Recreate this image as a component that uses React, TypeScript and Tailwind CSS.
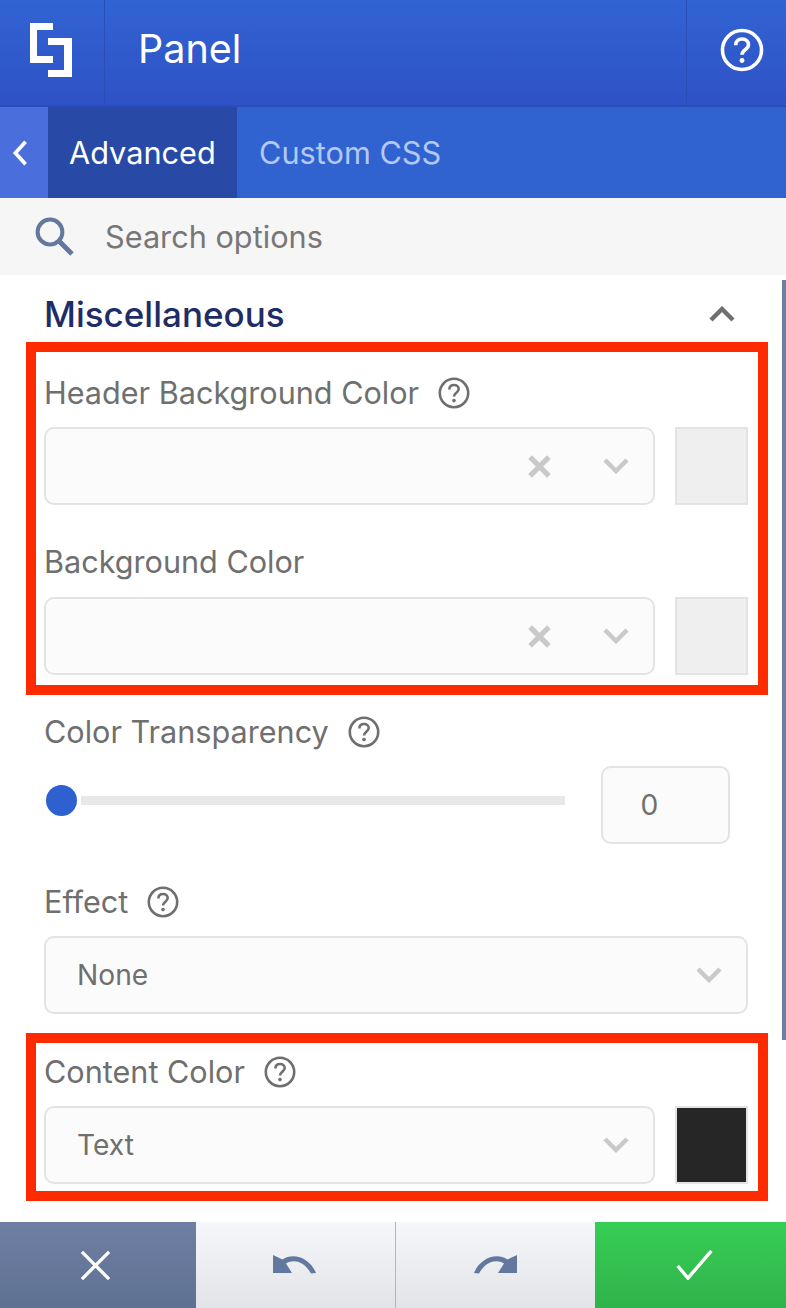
import React from "react";

const HelpIcon: React.FC<{ className?: string }> = ({ className }) => (
  <svg viewBox="0 0 32 32" className={className} fill="none" stroke="currentColor">
    <circle cx="16" cy="16" r="14.2" strokeWidth="2.6" />
    <path d="M11.4 12.6c0-2.9 2-4.6 4.7-4.6s4.6 1.7 4.6 4.1c0 3.6-4.7 3.7-4.7 7.4" strokeWidth="2.6" />
    <circle cx="16" cy="23.6" r="1.8" fill="currentColor" stroke="none" />
  </svg>
);

const Chevron: React.FC<{ className?: string; up?: boolean }> = ({ className, up }) => (
  <svg viewBox="0 0 26 16" className={className} fill="none" stroke="currentColor" strokeWidth="4.4">
    <path d={up ? "M2 14 13 3l11 11" : "M2 2l11 11L24 2"} />
  </svg>
);

const FieldLabel: React.FC<{ text: string; help?: boolean }> = ({ text, help = true }) => (
  <div className="flex items-center gap-[19px] h-[34px] text-[30.6px] leading-[34px] text-[#6f6f6f]">
    <span>{text}</span>
    {help && <HelpIcon className="w-[32px] h-[32px] text-[#6f6f6f]" />}
  </div>
);

const Select: React.FC<{ value?: string; clear?: boolean; className?: string }> = ({ value, clear, className }) => (
  <div
    className={`flex items-center h-[78px] rounded-[10px] border-2 border-[#e3e3e3] bg-[#fbfbfb] pl-[31px] pr-[24px] text-[28.2px] text-[#6f6f6f] ${className ?? ""}`}
  >
    <span className="flex-1">{value}</span>
    {clear && (
      <svg viewBox="0 0 22 22" className="w-[23px] h-[23px] mr-[52px] text-[#c9c9c9]" fill="none" stroke="currentColor" strokeWidth="5">
        <path d="M2 2l18 18M20 2 2 20" />
      </svg>
    )}
    <Chevron className="w-[26px] h-[16px] text-[#c9c9c9]" />
  </div>
);

const ColorField: React.FC<{ value?: string; clear?: boolean; swatch: string }> = ({ value, clear, swatch }) => (
  <div className="flex gap-[20px]">
    <Select value={value} clear={clear} className="flex-1" />
    <div className={`w-[73px] h-[78px] border-2 border-[#e3e3e3] ${swatch}`} />
  </div>
);

const App: React.FC = () => {
  return (
    <div className="relative w-[786px] h-[1308px] flex flex-col overflow-hidden bg-white font-['Inter',sans-serif]">
      {/* top bar */}
      <div className="flex h-[107px] shrink-0 border-b-2 border-[#2a4db8] bg-gradient-to-b from-[#3163d3] to-[#2f52c6] text-white">
        <div className="flex items-center justify-center w-[105px] pb-[5px] border-r border-[#2a4db8]">
          <svg viewBox="30 23 42 54" className="w-[42px] h-[54px] -ml-[3px] fill-white">
            <path d="M30 23h23v7H37v26h16v7H30z" />
            <path d="M48 38h24v39H48v-7h16V45H48z" />
          </svg>
        </div>
        <div className="flex flex-1 items-center pl-[33px] pb-[5px] text-[39.5px] font-normal">Panel</div>
        <div className="flex items-center justify-center w-[100px] pb-[5px] border-l border-[#2a4db8]">
          <HelpIcon className="w-[44px] h-[44px] ml-[10px] text-white" />
        </div>
      </div>

      {/* tabs */}
      <div className="flex h-[91px] shrink-0 bg-[#3063d0] text-[30.7px]">
        <div className="flex items-center justify-center w-[48px] bg-[#4a6fdc] text-white">
          <svg viewBox="0 0 18 28" className="w-[18px] h-[26px] -ml-[8px]" fill="none" stroke="currentColor" strokeWidth="4">
            <path d="M15 2 4 14l11 12" />
          </svg>
        </div>
        <div className="flex items-center pl-[21px] pt-[2px] w-[189px] bg-[#2849a6] text-white">Advanced</div>
        <div className="flex items-center pl-[22px] pt-[2px] text-[#b3c8f5]">Custom CSS</div>
      </div>

      {/* search */}
      <div className="flex items-center h-[77px] shrink-0 pl-[35px] bg-[#f7f6f6] text-[30.7px] text-[#777777]">
        <svg viewBox="0 0 40 40" className="w-[40px] h-[40px] mr-[30px] text-[#63789e]" fill="none" stroke="currentColor">
          <circle cx="15" cy="15" r="12.4" strokeWidth="4" />
          <path d="m24 24 13 13" strokeWidth="5" />
        </svg>
        <span className="pt-[2px]">Search options</span>
      </div>

      {/* options */}
      <div className="relative flex-1">
        <div className="absolute right-0 top-[5px] w-[4px] h-[760px] bg-[#6e7fa3]" />
        <div className="flex items-center justify-between h-[67px] pt-[11px] pl-[44px] pr-[51px]">
          <span className="text-[35px] font-medium text-[#1f2d66]">Miscellaneous</span>
          <Chevron up className="w-[26px] h-[16px] text-[#6f6f6f]" />
        </div>

        <div className="ml-[26px] w-[742px] h-[353px] border-[10px] border-[#ff2b00] pl-[8px] pr-[10px] pt-[24px]">
          <FieldLabel text="Header Background Color" />
          <div className="mt-[17px]">
            <ColorField clear swatch="bg-[#efefef]" />
          </div>
          <div className="mt-[40px]">
            <FieldLabel text="Background Color" help={false} />
          </div>
          <div className="mt-[18px]">
            <ColorField clear swatch="bg-[#efefef]" />
          </div>
        </div>

        <div className="pl-[44px] pr-[38px] pt-[20px]">
          <FieldLabel text="Color Transparency" />
          <div className="flex items-start mt-[17px]">
            <div className="w-[31px] h-[31px] mt-[19px] ml-[2px] rounded-full bg-[#2f60d0]" />
            <div className="w-[484px] h-[9px] mt-[30px] ml-[4px] bg-[#e8e8e8]" />
            <div className="flex items-center justify-center w-[129px] h-[78px] ml-[36px] pr-[32px] rounded-[10px] border-2 border-[#e3e3e3] bg-[#fbfbfb] text-[28.2px] text-[#6f6f6f]">
              0
            </div>
          </div>
          <div className="mt-[41px]">
            <FieldLabel text="Effect" />
          </div>
          <Select value="None" className="mt-[17px]" />
        </div>

        <div className="ml-[26px] w-[742px] mt-[19px] h-[168px] border-[10px] border-[#ff2b00] pl-[8px] pr-[10px] pt-[12px]">
          <FieldLabel text="Content Color" />
          <div className="mt-[17px]">
            <ColorField value="Text" swatch="bg-[#262626]" />
          </div>
        </div>
      </div>

      {/* footer */}
      <div className="flex h-[86px] shrink-0">
        <div className="flex items-center justify-center w-[196px] pr-[5px] bg-gradient-to-b from-[#6e7fa3] to-[#5f7193] text-white">
          <svg viewBox="0 0 32 32" className="w-[31px] h-[31px]" fill="none" stroke="currentColor" strokeWidth="3.4">
            <path d="M2 2l28 28M30 2 2 30" />
          </svg>
        </div>
        <div className="flex items-center justify-center w-[200px] border-r border-[#b5b5b5] bg-gradient-to-b from-[#f6f7fa] to-[#e2e4e7] text-[#63789e]">
          <svg viewBox="0 0 44 20" className="w-[44px] h-[20px] -ml-[2px]" fill="currentColor">
            <path d="M0 0v18h19L13 8.5C20 4 31 5.5 38 18.5l5-.5C37 3.5 21-3 9.5 4.5z" />
          </svg>
        </div>
        <div className="flex items-center justify-center w-[199px] bg-gradient-to-b from-[#f6f7fa] to-[#e2e4e7] text-[#63789e]">
          <svg viewBox="0 0 44 20" className="w-[44px] h-[20px] -ml-[1px] -scale-x-100" fill="currentColor">
            <path d="M0 0v18h19L13 8.5C20 4 31 5.5 38 18.5l5-.5C37 3.5 21-3 9.5 4.5z" />
          </svg>
        </div>
        <div className="flex flex-1 items-center justify-center pl-[7px] bg-gradient-to-b from-[#37ce55] to-[#2fb34a] text-white">
          <svg viewBox="0 0 40 32" className="w-[39px] h-[30px]" fill="none" stroke="currentColor" strokeWidth="3.6">
            <path d="M2 17l11 13L38 1" />
          </svg>
        </div>
      </div>
    </div>
  );
};

export default App;
